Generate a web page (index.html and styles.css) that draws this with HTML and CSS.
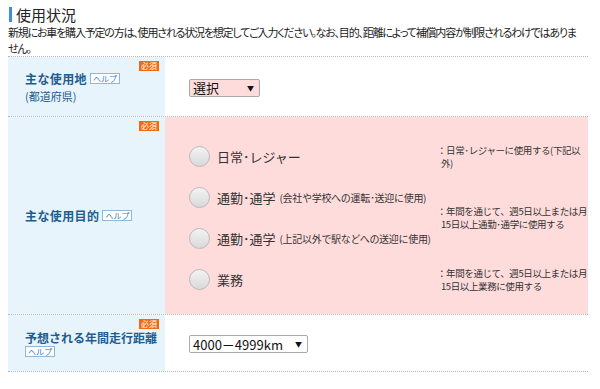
FILE: index.html
```html
<!DOCTYPE html>
<html lang="ja">
<head>
    <meta charset="UTF-8">
    <meta name="viewport" content="width=device-width, initial-scale=1.0">
    <title>使用状況</title>
    <link rel="stylesheet" href="styles.css">
</head>
<body>
    <div class="page">
        <h2 class="heading">使用状況</h2>
        <p class="lead">新規にお車を購入予定の方は、使用される状況を想定してご入力ください。なお、目的、距離によって補償内容が制限されるわけではありま<br>せん。</p>

        <div class="form">
            <div class="row row-area">
                <div class="label-cell">
                    <span class="req">必須</span>
                    <div class="label">主な使用地<span class="help">ヘルプ</span></div>
                    <div class="label-sub">(都道府県)</div>
                </div>
                <div class="field-cell">
                    <div class="select select-pink">
                        <span class="select-text">選択</span>
                        <span class="select-arrow">▼</span>
                    </div>
                </div>
            </div>

            <div class="row row-purpose">
                <div class="label-cell">
                    <span class="req">必須</span>
                    <div class="label">主な使用目的<span class="help">ヘルプ</span></div>
                </div>
                <div class="field-cell field-pink">
                    <div class="options">
                        <div class="group">
                            <div class="choices">
                                <label class="choice"><span class="radio"></span>日常･レジャー</label>
                            </div>
                            <p class="note">：日常･レジャーに使用する(下記以<br>外)</p>
                        </div>
                        <div class="group">
                            <div class="choices">
                                <label class="choice"><span class="radio"></span>通勤･通学<small>(会社や学校への運転･送迎に使用)</small></label>
                                <label class="choice"><span class="radio"></span>通勤･通学<small>(上記以外で駅などへの送迎に使用)</small></label>
                            </div>
                            <p class="note">：年間を通じて、週5日以上または月<br>15日以上通勤･通学に使用する</p>
                        </div>
                        <div class="group">
                            <div class="choices">
                                <label class="choice"><span class="radio"></span>業務</label>
                            </div>
                            <p class="note">：年間を通じて、週5日以上または月<br>15日以上業務に使用する</p>
                        </div>
                    </div>
                </div>
            </div>

            <div class="row row-distance">
                <div class="label-cell">
                    <span class="req">必須</span>
                    <div class="label label-long">予想される年間走行距離</div>
                    <div class="help-line"><span class="help help-block">ヘルプ</span></div>
                </div>
                <div class="field-cell">
                    <div class="select select-wide">
                        <span class="select-text">4000－4999km</span>
                        <span class="select-arrow">▼</span>
                    </div>
                </div>
            </div>
        </div>
    </div>
</body>
</html>
```

FILE: styles.css
```css
body {
    margin: 0;
    background-color: #fff;
    color: #222;
    font-family: "Noto Sans CJK JP", "DejaVu Sans", sans-serif;
}

.page {
    padding: 7px 12px 0 8px;
}

.heading {
    margin: 0 0 2px 1px;
    padding-left: 4px;
    border-left: 3px solid #3b8fd8;
    font-size: 15px;
    font-weight: normal;
    line-height: 15px;
    color: #222;
}

.lead {
    margin: 0;
    font-size: 11px;
    line-height: 16px;
    letter-spacing: -1.2px;
    font-feature-settings: "palt";
    white-space: nowrap;
    color: #222;
}

.form {
    border-bottom: 1px dotted #b8b8b8;
}

.row {
    display: grid;
    grid-template-columns: 157px 1fr;
    border-top: 1px dotted #b8b8b8;
}

.row-area {
    height: 59px;
}

.row-purpose {
    height: 197px;
}

.row-distance {
    height: 56px;
}

.label-cell {
    position: relative;
    background-color: #e8f4fb;
    padding-left: 17px;
    display: flex;
    flex-direction: column;
    justify-content: center;
}

.req {
    position: absolute;
    top: 4px;
    right: 6px;
    background-color: #f26a10;
    color: #fff;
    font-size: 8px;
    line-height: 10px;
    padding: 0 2px;
}

.label {
    font-size: 12px;
    font-weight: bold;
    color: #1f5d8f;
    line-height: 18px;
    letter-spacing: 0.4px;
}

.label-long {
    letter-spacing: 0;
    white-space: nowrap;
    line-height: 16px;
}

.label-sub {
    font-size: 11px;
    color: #1f5d8f;
    line-height: 16px;
}

.help {
    display: inline-block;
    margin-left: 3px;
    padding: 0 2px;
    border: 1px solid #8cb8e0;
    background-color: #fff;
    color: #3a7cc2;
    font-size: 8px;
    font-weight: normal;
    line-height: 9px;
    letter-spacing: 0;
    vertical-align: 2px;
}

.help-line {
    line-height: 11px;
}

.help-block {
    margin-left: 0;
    vertical-align: top;
}

.field-cell {
    display: flex;
    align-items: center;
    padding-left: 24px;
}

.field-pink {
    background-color: #ffdcdc;
    align-items: flex-start;
    padding-top: 19px;
}

.select {
    box-sizing: border-box;
    height: 18px;
    display: flex;
    align-items: center;
    justify-content: space-between;
    border: 1px solid #a9a9a9;
    border-radius: 2px;
    padding: 0 5px 0 3px;
    background-color: #fff;
    font-size: 13px;
    color: #111;
}

.select-pink {
    width: 71px;
    background-color: #ffdcdc;
    margin-top: 2px;
}

.select-wide {
    width: 119px;
    margin-top: 2px;
}

.select-arrow {
    font-size: 7px;
    color: #111;
}

.options {
    width: 100%;
}

.group {
    display: grid;
    grid-template-columns: 248px 1fr;
    align-items: center;
}

.choices {
    display: flex;
    flex-direction: column;
}

.choice {
    height: 41px;
    display: flex;
    align-items: center;
    font-size: 13px;
    color: #333;
}

.choice small {
    font-size: 10px;
    margin-left: 4px;
    letter-spacing: -0.3px;
}

.radio {
    box-sizing: border-box;
    width: 21px;
    height: 21px;
    border-radius: 50%;
    border: 1px solid #b9b9b9;
    background: linear-gradient(#f3f3f3, #d9d9d9);
    margin-right: 7px;
}

.note {
    margin: 0;
    font-size: 9.5px;
    line-height: 13px;
    color: #333;
    padding-left: 4px;
    text-indent: -4px;
    letter-spacing: -0.4px;
    white-space: nowrap;
}
```
